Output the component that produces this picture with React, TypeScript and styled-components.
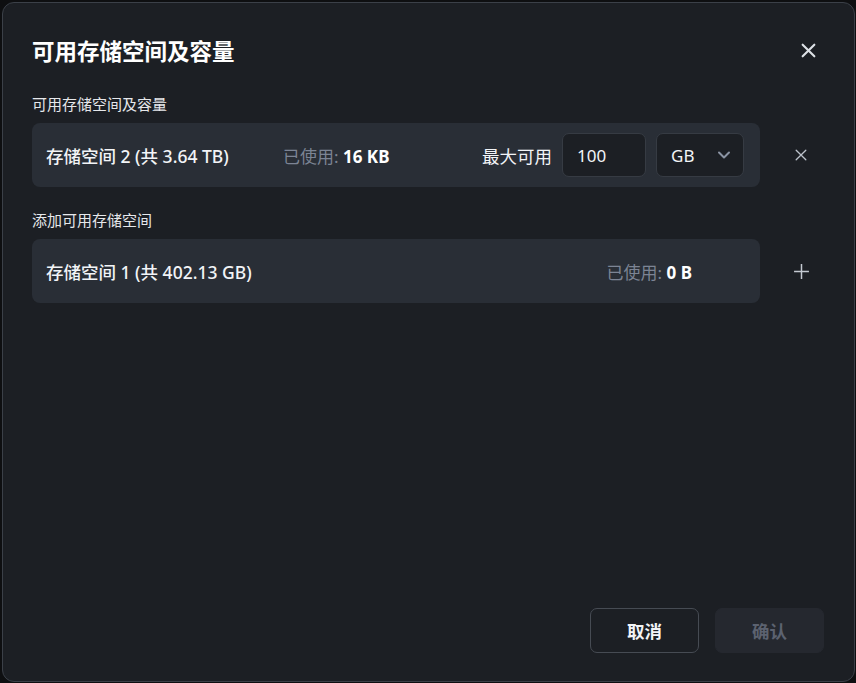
import React, {useState} from 'react';
import styled, {createGlobalStyle} from 'styled-components';

const GlobalStyle = createGlobalStyle`
  html, body {
    margin: 0;
    padding: 0;
    background: #0e0f11;
  }

  body {
    font-family: "Noto Sans", "Noto Sans CJK SC", sans-serif;
    color: #f0f2f5;
  }

  * {
    box-sizing: border-box;
  }
`

const Backdrop = styled.div`
  width: 856px;
  height: 683px;
  padding: 2px 1px 1px 2px;
`

const Dialog = styled.div`
  height: 100%;
  display: flex;
  flex-direction: column;
  background: #1c1f24;
  border: 1px solid #3b4048;
  border-radius: 12px;
  padding: 25px 30px 28px 29px;
`

const Header = styled.div`
  display: flex;
  align-items: center;
  justify-content: space-between;
  height: 44px;
`

const Title = styled.h1`
  margin: 0;
  font-size: 22.5px;
  font-weight: 700;
  color: #ffffff;
  font-family: "Noto Sans CJK SC", sans-serif;
`

const IconButton = styled.button<{ size?: number }>`
  display: flex;
  align-items: center;
  justify-content: center;
  width: 28px;
  height: 28px;
  padding: 0;
  border: none;
  background: transparent;
  cursor: pointer;

  svg {
    width: ${({size}) => size || 16}px;
    height: ${({size}) => size || 16}px;
  }
`

const SectionLabel = styled.div<{ top: number }>`
  margin-top: ${({top}) => top}px;
  margin-bottom: 9px;
  font-size: 15px;
  line-height: 20px;
  color: #e6e8eb;
  font-family: "Noto Sans CJK SC", sans-serif;
`

const Line = styled.div`
  display: flex;
  align-items: center;
  gap: 27px;
`

const Row = styled.div<{ trail?: number }>`
  flex: 0 0 728px;
  height: 64px;
  display: flex;
  align-items: center;
  background: #292e36;
  border-radius: 8px;
  padding: 0 ${({trail}) => trail ?? 16}px 0 14px;
`

const Name = styled.span<{ w?: number }>`
  width: ${({w}) => (w ? `${w}px` : 'auto')};
  flex: ${({w}) => (w ? 'none' : '1')};
  font-size: 17.5px;
  font-weight: 500;
  color: #f2f4f7;
`

const Used = styled.span`
  font-size: 17px;
  color: #7c8494;

  b {
    color: #ffffff;
    font-weight: 700;
  }
`

const Spacer = styled.div`
  flex: 1;
`

const MaxLabel = styled.span`
  font-size: 17.5px;
  color: #f2f4f7;
  margin-right: 10px;
  font-family: "Noto Sans CJK SC", sans-serif;
`

const Field = styled.input`
  width: 84px;
  height: 44px;
  background: #1c1f24;
  border: 1px solid #363b43;
  border-radius: 7px;
  color: #f2f4f7;
  font-size: 17px;
  font-family: "Noto Sans", sans-serif;
  padding: 0 14px;
  outline: none;
`

const Select = styled.div`
  width: 88px;
  height: 44px;
  margin-left: 10px;
  display: flex;
  align-items: center;
  justify-content: space-between;
  background: #1c1f24;
  border: 1px solid #363b43;
  border-radius: 7px;
  padding: 0 12px 0 14px;
  font-size: 17px;
  color: #f2f4f7;
  font-family: "Noto Sans", sans-serif;

  svg {
    width: 14px;
    height: 14px;
  }
`

const Footer = styled.div`
  margin-top: auto;
  display: flex;
  justify-content: flex-end;
  gap: 16px;
`

const Button = styled.button<{ primary?: boolean }>`
  width: 109px;
  height: 45px;
  border-radius: 7px;
  font-size: 17.5px;
  font-weight: 700;
  font-family: "Noto Sans CJK SC", sans-serif;
  cursor: pointer;
  border: 1px solid ${({primary}) => (primary ? '#25282f' : '#464b53')};
  background: ${({primary}) => (primary ? '#25282f' : 'transparent')};
  color: ${({primary}) => (primary ? '#5c6270' : '#f2f4f7')};
`

const CloseIcon = ({color, width}: { color: string; width: number }) => (
  <svg viewBox="0 0 16 16" fill="none" stroke={color} strokeWidth={width} strokeLinecap="round">
    <path d="M2.5 2.5 13.5 13.5M13.5 2.5 2.5 13.5"/>
  </svg>
);

const PlusIcon = () => (
  <svg viewBox="0 0 16 16" fill="none" stroke="#c4c9d1" strokeWidth={1.4}>
    <path d="M8 1v14M1 8h14"/>
  </svg>
);

const Chevron = () => (
  <svg viewBox="0 0 14 14" fill="none" stroke="#8a93a3" strokeWidth={2} strokeLinecap="round" strokeLinejoin="round">
    <path d="M2 4.5 7 9.5 12 4.5"/>
  </svg>
);

export default function App() {
  const [amount, setAmount] = useState('100');

  return (
    <>
      <GlobalStyle/>
      <Backdrop>
        <Dialog>
          <Header>
            <Title>可用存储空间及容量</Title>
            <IconButton size={17} style={{marginRight: 2}}>
              <CloseIcon color="#dde1e6" width={2}/>
            </IconButton>
          </Header>

          <SectionLabel top={22}>可用存储空间及容量</SectionLabel>
          <Line>
            <Row>
              <Name w={237}>存储空间 2 (共 3.64 TB)</Name>
              <Used>已使用: <b>16 KB</b></Used>
              <Spacer/>
              <MaxLabel>最大可用</MaxLabel>
              <Field value={amount} onChange={e => setAmount(e.target.value)}/>
              <Select>
                GB
                <Chevron/>
              </Select>
            </Row>
            <IconButton size={14}>
              <CloseIcon color="#bcc2cb" width={1.5}/>
            </IconButton>
          </Line>

          <SectionLabel top={23}>添加可用存储空间</SectionLabel>
          <Line>
            <Row trail={68}>
              <Name>存储空间 1 (共 402.13 GB)</Name>
              <Used>已使用: <b>0 B</b></Used>
            </Row>
            <IconButton size={17}>
              <PlusIcon/>
            </IconButton>
          </Line>

          <Footer>
            <Button>取消</Button>
            <Button primary>确认</Button>
          </Footer>
        </Dialog>
      </Backdrop>
    </>
  );
}
